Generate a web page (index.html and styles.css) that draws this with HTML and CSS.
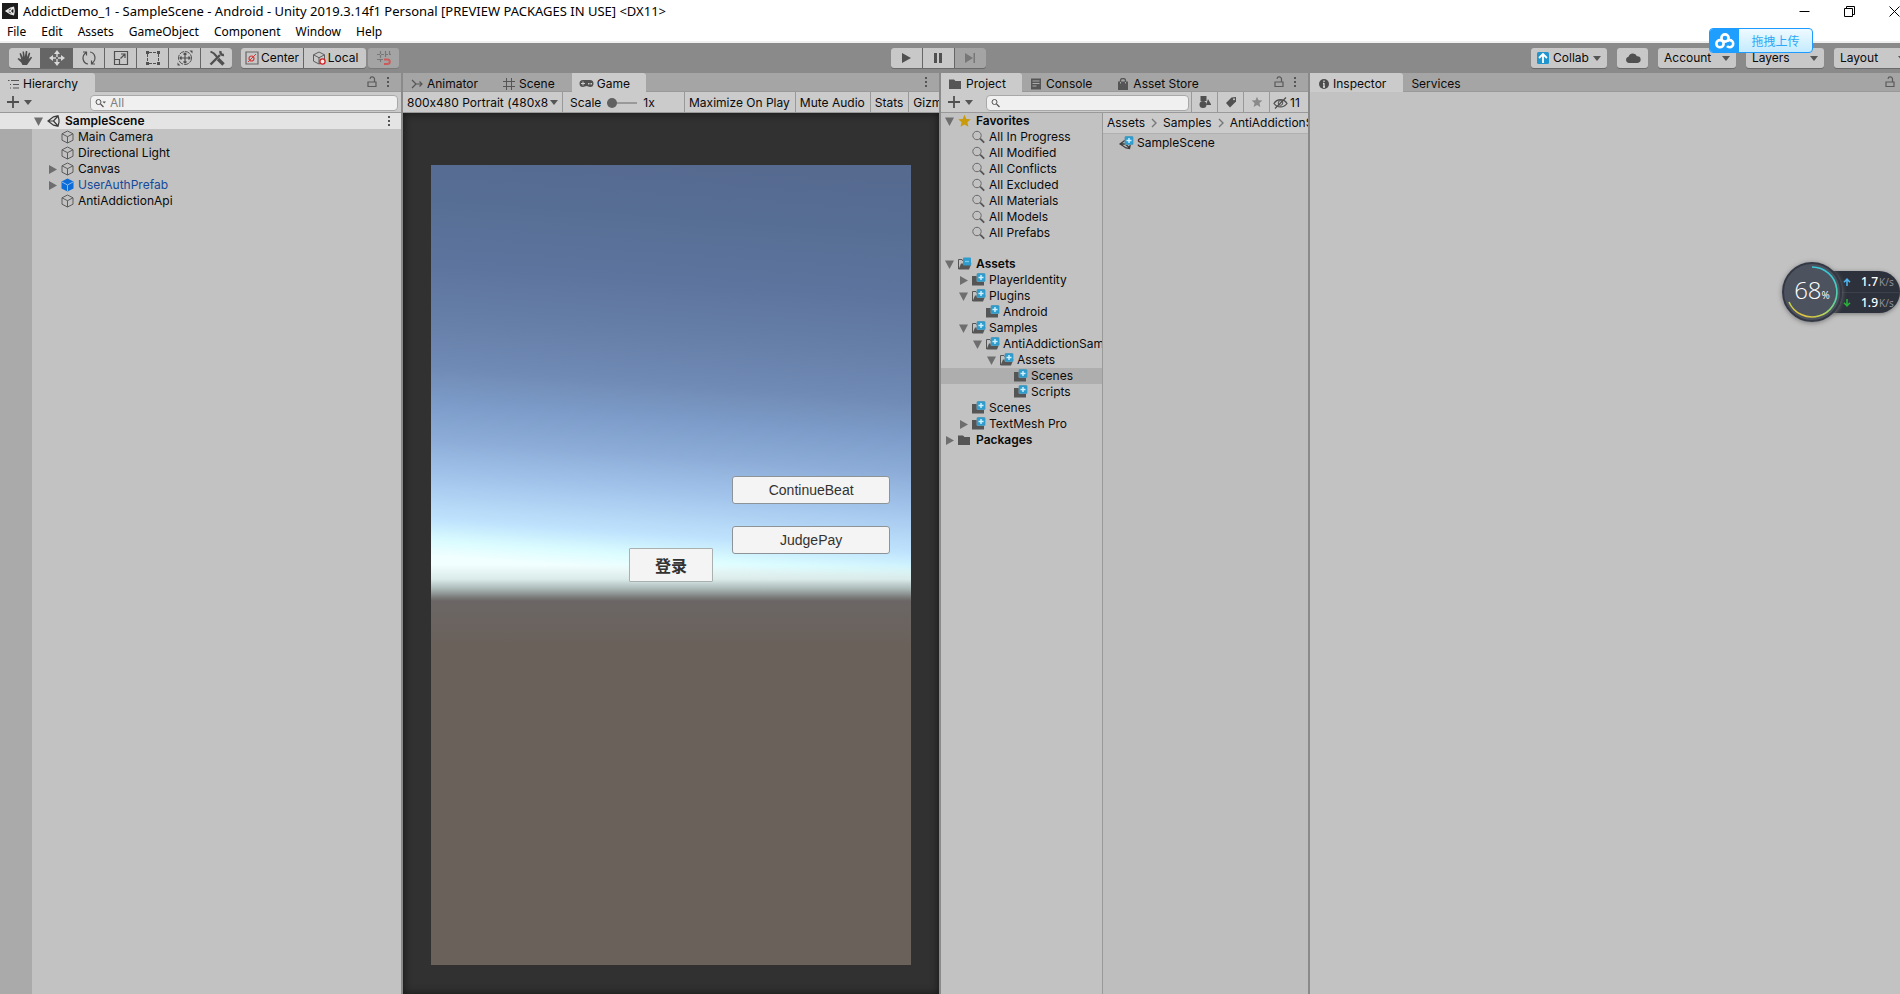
FILE: index.html
```html
<!DOCTYPE html>
<html lang="en">
<head>
<meta charset="utf-8">
<title>AddictDemo_1 - SampleScene - Android - Unity 2019.3.14f1 Personal</title>
<link rel="stylesheet" href="styles.css">
</head>
<body>
<svg class="defs" aria-hidden="true">
  <defs>
    <symbol id="cube" viewBox="0 0 14 14"><path d="M7 1l5.500 2.800v6.400L7 13l-5.500-2.800V3.800zM1.500 3.800L7 6.700l5.500-2.900M7 6.700V13" fill="none" stroke="#5c5c5c" stroke-linejoin="round"/></symbol>
    <symbol id="prefab" viewBox="0 0 14 14"><path d="M7 .5l6 3v7l-6 3-6-3v-7z" fill="#0c6cd8"/><path d="M1.500 4L7 7l5.500-3M7 7v6" fill="none" stroke="#8dbdf0"/></symbol>
    <symbol id="unity" viewBox="0 0 14 14"><path d="M1.500 7L7 2.800l4.500-1 1 4v2.400l-1 4-4.500-1zM1.500 7H7l4.500-5M7 7l4.500 5" fill="none" stroke="#3a3a3a" stroke-width="1.200"/></symbol>
    <symbol id="unityplus" viewBox="0 0 15 14"><path d="M1 8l5.500-4 4 .5 1 3-1 5-3.500-.5zM1 8h5l5 4M6 8l2-4" fill="none" stroke="#3c3c3c" stroke-width="1.300"/><use href="#plusbadge"/></symbol>
    <symbol id="right" viewBox="0 0 14 14"><path d="M3 3l8 4.500L3 12z" fill="#6e6e6e"/></symbol>
    <symbol id="down" viewBox="0 0 14 14"><path d="M2 3.500h9L6.500 12z" fill="#6e6e6e"/></symbol>
    <symbol id="caret" viewBox="0 0 8 5"><path d="M0 0h8L4 5z" fill="#555"/></symbol>
    <symbol id="lens" viewBox="0 0 14 14"><circle cx="5.500" cy="5.500" r="4.200" fill="none" stroke="#6a6a6a"/><path d="M8.700 8.700l4 4" stroke="#555" stroke-width="1.800"/></symbol>
    <symbol id="star" viewBox="0 0 14 14"><path d="M7 .8l1.800 4.100 4.500.4-3.400 3 1 4.400L7 10.400l-3.900 2.300 1-4.400-3.400-3 4.500-.4z" fill="currentColor"/></symbol>
    <symbol id="plusbadge" viewBox="0 0 15 14"><rect x="5.500" y="0" width="9" height="9" rx="1.500" fill="#6f9db0"/><rect x="6" y=".5" width="8" height="8" rx="1" fill="#2e9ccc"/><path d="M10 2v5M7.500 4.500h5" stroke="#d4f2ff" stroke-width="1.400"/></symbol>
    <symbol id="folder" viewBox="0 0 15 14"><path d="M1 2.500h5l1.500 1.500H13v8H1z" fill="#555"/></symbol>
    <symbol id="folderplus" viewBox="0 0 15 14"><path d="M1 3h5v2h7v7.500H1z" fill="#555"/><use href="#plusbadge"/></symbol>
    <symbol id="openplus" viewBox="0 0 15 14"><path d="M1.500 12V2.500H5l1 1.500h5" fill="none" stroke="#555"/><path d="M4 6.500h10.500L12 12.500H1.500z" fill="#555"/><use href="#plusbadge"/></symbol>
    <symbol id="openminus" viewBox="0 0 15 14"><path d="M1.500 12V2.500H5l1 1.500h5" fill="none" stroke="#555"/><path d="M4 6.500h10.500L12 12.500H1.500z" fill="#555"/><rect x="6" y=".5" width="8" height="8" rx="1" fill="#2e9ccc"/><path d="M8 4.500h4" stroke="#7cc8e8" stroke-width="1.400"/></symbol>
    <symbol id="lock" viewBox="0 0 10 12"><path d="M1 6h8v4.500H1zM7.500 6V3.500a2 2 0 0 0-4.500-.7" fill="none" stroke="#5a5a5a" stroke-width="1.200"/></symbol>
    <symbol id="dots" viewBox="0 0 4 12"><path d="M1 1h2v2H1zM1 5h2v2H1zM1 9h2v2H1z" fill="#555"/></symbol>
    <symbol id="plus" viewBox="0 0 12 12"><path d="M6 0v12M0 6h12" stroke="#505050" stroke-width="1.800"/></symbol>
    <symbol id="chev" viewBox="0 0 6 10"><path d="M1 1l4 4-4 4" fill="none" stroke="#777" stroke-width="1.400"/></symbol>
  </defs>
</svg>

<div class="app">
  <header class="titlebar">
    <svg class="logo" viewBox="0 0 16 16"><path d="M0 0h16v16H0z" fill="#1c1c1c"/><path d="M4 8l4.500-3 3-.7.6 3v1.400l-.6 3-3-.7zM4 8h4l3.500-3.500M8 8l3.500 3.500" fill="none" stroke="#e8e8e8" stroke-width="1.300"/></svg>
    <h1>AddictDemo_1 - SampleScene - Android - Unity 2019.3.14f1 Personal [PREVIEW PACKAGES IN USE] &lt;DX11&gt;</h1>
    <div class="winbtns">
      <button aria-label="Minimize"><svg viewBox="0 0 11 11"><path d="M.5 5.500h10" stroke="#000"/></svg></button>
      <button aria-label="Restore"><svg viewBox="0 0 11 11"><path d="M.5 2.500h8v8h-8zM2.500 2.500v-2h8v8h-2" fill="none" stroke="#000"/></svg></button>
      <button aria-label="Close"><svg viewBox="0 0 11 11"><path d="M.5.5l10 10M10.500.5l-10 10" stroke="#000"/></svg></button>
    </div>
  </header>
  <nav class="menubar">
    <button>File</button><button>Edit</button><button>Assets</button><button>GameObject</button><button>Component</button><button>Window</button><button>Help</button>
  </nav>

  <div class="toolbar">
    <div class="tools">
      <div class="group">
        <button aria-label="Hand"><svg viewBox="0 0 16 16"><path d="M4.300 9.500L2.500 3.500l1.300-.4L6 7.500 5.500 1.600 7 1.400l.8 5.400L8.800 1l1.500.1-.3 6 2-4.500 1.300.5-1.600 6 2.300-2.400 1.200.9-3.800 5.400-1.400 2H5.500L4.200 12.500.5 9l1-1z" fill="#505050"/></svg></button>
        <button class="on" aria-label="Move"><svg viewBox="0 0 16 16"><path d="M8 3v10M3 8h10" stroke="#d8d8d8" stroke-width="1.400"/><path d="M8 0l3 4H5zM8 16l3-4H5zM0 8l4-3v6zM16 8l-4-3v6z" fill="#d8d8d8"/><path d="M7 7h2v2H7z" fill="#656565"/></svg></button>
        <button aria-label="Rotate"><svg viewBox="0 0 16 16"><path d="M7 14C2.500 13.500-.5 7 5 2.500M9 2c4.500.500 7.500 7 2 11.500M2 2h3.500v3.500M14 14h-3.500v-3.500" fill="none" stroke="#505050" stroke-width="1.200"/></svg></button>
        <button aria-label="Scale"><svg viewBox="0 0 16 16"><path d="M1.500 1.500h13v13h-13zM1.500 9.500h5v5M7.500 8.500l4-4M8 4h4v4" fill="none" stroke="#505050" stroke-width="1.200"/></svg></button>
        <button aria-label="Rect"><svg viewBox="0 0 16 16"><path d="M2.500 4v8M13.500 4v8M4 2.500h8M4 13.500h8" stroke="#505050" stroke-dasharray="3 1"/><path d="M1 1h3v3H1zM12 1h3v3h-3zM1 12h3v3H1zM12 12h3v3h-3z" fill="#505050"/></svg></button>
        <button aria-label="Transform"><svg viewBox="0 0 16 16"><circle cx="8" cy="8" r="6.500" fill="none" stroke="#505050" stroke-dasharray="5 1"/><path d="M8 3v10M3 8h10M6.500 4.500L8 3l1.500 1.500M6.500 11.500L8 13l1.500-1.500M4.500 6.500L3 8l1.500 1.500M11.500 6.500L13 8l-1.500 1.500" fill="none" stroke="#505050" stroke-width="1.200"/><path d="M12.500 .500h3V3.500zM.5 12.500v3h3z" fill="#505050"/></svg></button>
        <button aria-label="Custom tools"><svg viewBox="0 0 16 16"><path d="M1.500 14.500L11 5" stroke="#505050" stroke-width="2.400"/><path d="M11.500 1a3.200 3.200 0 0 0 3.500 4" fill="none" stroke="#505050" stroke-width="2.400"/><path d="M1.500 1.500l3.500 2 3.500 4" fill="none" stroke="#505050" stroke-width="2"/><path d="M9 9l5.500 5.500" stroke="#505050" stroke-width="3.400"/></svg></button>
      </div>
      <div class="group wide">
        <button><svg viewBox="0 0 14 14"><path d="M1 1h12v12H1z" fill="none" stroke="#666" stroke-width="1.200"/><circle cx="6.500" cy="7.500" r="2.500" fill="none" stroke="#d03c3c" stroke-width="1.200"/><path d="M3 11l8-8" stroke="#d03c3c"/></svg>Center</button>
        <button><svg viewBox="0 0 14 14"><use href="#cube"/><circle cx="10.500" cy="10.500" r="2.600" fill="#eee" stroke="#d02020" stroke-width="1.300"/></svg>Local</button>
      </div>
      <button class="solo dim" aria-label="Snap"><svg viewBox="0 0 16 16"><path d="M4.500 1v12M9.500 1v6M13.500 1v4M1 4.500h14M1 9.500h6" stroke="#777" stroke-width="1.200" stroke-dasharray="3 1"/><path d="M8 9.500h3.500a2 2 0 0 1 0 4.500H8" fill="none" stroke="#cc5c5c" stroke-width="2"/></svg></button>
    </div>
    <div class="group play">
      <button aria-label="Play"><svg viewBox="0 0 12 12"><path d="M2 1l9 5-9 5z" fill="#505050"/></svg></button>
      <button aria-label="Pause"><svg viewBox="0 0 12 12"><path d="M2 1h3v10H2zM7 1h3v10H7z" fill="#505050"/></svg></button>
      <button class="dim" aria-label="Step"><svg viewBox="0 0 12 12"><path d="M1 1l8 5-8 5zM9.500 1H11v10H9.500z" fill="#777"/></svg></button>
    </div>
    <div class="account">
      <button class="collab"><svg class="up" viewBox="0 0 12 12"><rect width="12" height="12" rx="1.500" fill="#2196cc"/><path d="M6 11V2M2 6l4-4 4 4" fill="none" stroke="#fff" stroke-width="1.800"/></svg>Collab<svg class="caret"><use href="#caret"/></svg></button>
      <button class="cloud" aria-label="Cloud"><svg viewBox="0 0 16 12"><path d="M4 11a3.200 3.200 0 0 1-.5-6.300A4.500 4.500 0 0 1 12 4.200 3.300 3.300 0 0 1 12.500 11z" fill="#505050"/></svg></button>
      <button class="drop">Account<svg class="caret"><use href="#caret"/></svg></button>
      <button class="drop">Layers<svg class="caret"><use href="#caret"/></svg></button>
      <button class="drop">Layout<svg class="caret"><use href="#caret"/></svg></button>
    </div>
  </div>

  <main class="panels">
    <section class="panel">
      <div class="tabs">
        <button class="tab active hier"><svg class="i12" viewBox="0 0 12 12"><path d="M1 2.500h1.500M4 2.500h8M3 6.500h1M6 6.500h6M3 10h1M6 10h6" stroke="#555" stroke-width="1.200"/></svg>Hierarchy</button>
        <span class="ends"><svg class="lock"><use href="#lock"/></svg><svg class="dots"><use href="#dots"/></svg></span>
      </div>
      <div class="bar">
        <button class="add" aria-label="Create"><svg class="i12"><use href="#plus"/></svg><svg class="caret"><use href="#caret"/></svg></button>
        <label class="search"><svg class="find" viewBox="0 0 12 10"><circle cx="3.500" cy="4" r="2.500" fill="none" stroke="#555"/><path d="M5.500 6l3 3" stroke="#555" stroke-width="1.200"/><path d="M7.500 3.500H11L9.200 5.500z" fill="#555"/></svg><input type="text" placeholder="All" aria-label="Search hierarchy"></label>
      </div>
      <div class="scenetree">
        <ul class="tree">
          <li class="scene"><svg class="arrow"><use href="#down"/></svg><svg class="ic"><use href="#unity"/></svg><b>SampleScene</b><svg class="dots"><use href="#dots"/></svg></li>
          <li class="l1"><svg class="arrow"></svg><svg class="ic"><use href="#cube"/></svg>Main Camera</li>
          <li class="l1"><svg class="arrow"></svg><svg class="ic"><use href="#cube"/></svg>Directional Light</li>
          <li class="l1"><svg class="arrow"><use href="#right"/></svg><svg class="ic"><use href="#cube"/></svg>Canvas</li>
          <li class="l1 blue"><svg class="arrow"><use href="#right"/></svg><svg class="ic"><use href="#prefab"/></svg>UserAuthPrefab</li>
          <li class="l1"><svg class="arrow"></svg><svg class="ic"><use href="#cube"/></svg>AntiAddictionApi</li>
        </ul>
      </div>
    </section>

    <section class="panel">
      <div class="tabs">
        <button class="tab"><svg class="i12" viewBox="0 0 12 12"><path d="M1 2l4 4-4 4M5 6h6M8.500 3.500L11 6 8.500 8.500" fill="none" stroke="#555" stroke-width="1.200"/></svg>Animator</button>
        <button class="tab"><svg class="i12" viewBox="0 0 12 12"><path d="M3.500 0v12M8.500 0v12M0 3.500h12M0 8.500h12" stroke="#555"/></svg>Scene</button>
        <button class="tab active game"><svg class="pad" viewBox="0 0 15 9"><path d="M4 1h7a3.500 3.500 0 0 1 0 7c-1.500 0-2-1-3.500-1S5.500 8 4 8a3.500 3.500 0 0 1 0-7z" fill="#505050"/><path d="M4 2.500v4M2 4.500h4" stroke="#ccc"/><path d="M9 4h1.500v1.500H9zM11.500 4H13v1.500h-1.500z" fill="#ccc"/></svg>Game</button>
        <span class="ends"><svg class="dots"><use href="#dots"/></svg></span>
      </div>
      <div class="bar gamebar">
        <div class="aspect"><select aria-label="Aspect"><option>800x480 Portrait (480x800)</option></select><svg class="caret"><use href="#caret"/></svg></div>
        <label class="scale">Scale<input type="range" min="1" max="5" value="1"><span>1x</span></label>
        <button>Maximize On Play</button>
        <button>Mute Audio</button>
        <button>Stats</button>
        <button>Gizmos</button>
      </div>
      <div class="gameview">
        <div class="canvas">
          <button class="gbtn beat">ContinueBeat</button>
          <button class="gbtn pay">JudgePay</button>
          <button class="gbtn login">登录</button>
        </div>
      </div>
    </section>

    <section class="panel">
      <div class="tabs">
        <button class="tab active proj"><svg class="fold"><use href="#folder"/></svg>Project</button>
        <button class="tab"><svg class="i12" viewBox="0 0 12 12"><path d="M1 .5h10v11H1z" fill="#555"/><path d="M2.500 3h7M2.500 5.500h7M2.500 8h4" stroke="#aaa"/></svg>Console</button>
        <button class="tab"><svg class="i12" viewBox="0 0 12 12"><path d="M1 3.500h10V12H1z" fill="#555"/><path d="M3.500 5V2.500a2.500 2 0 0 1 5 0V5" fill="none" stroke="#555" stroke-width="1.300"/><path d="M3.500 4v1.500M8.500 4v1.500" stroke="#aaa"/></svg>Asset Store</button>
        <span class="ends"><svg class="lock"><use href="#lock"/></svg><svg class="dots"><use href="#dots"/></svg></span>
      </div>
      <div class="bar projbar">
        <button class="add" aria-label="Create"><svg class="i12"><use href="#plus"/></svg><svg class="caret"><use href="#caret"/></svg></button>
        <label class="search"><svg class="find" viewBox="0 0 12 10"><circle cx="3.500" cy="4" r="2.500" fill="none" stroke="#555"/><path d="M5.500 6l3 3" stroke="#555" stroke-width="1.200"/></svg><input type="text" aria-label="Search project"></label>
        <button class="filter" aria-label="Filter by type"><svg class="i12" viewBox="0 0 12 12"><path d="M1.500 0h6v5h-6zM9 3l3.500 6H7z" fill="#505050"/><circle cx="4" cy="8.500" r="3.500" fill="#505050"/></svg></button>
        <button class="filter" aria-label="Filter by label"><svg class="i12" viewBox="0 0 12 12"><path d="M1 7l5.500-5.500L11 1v4.500L5 11.500z" fill="#505050"/><circle cx="9" cy="3.200" r="1" fill="#ccc"/></svg></button>
        <button class="filter faint" aria-label="Favorite"><svg class="i12" viewBox="0 0 14 14"><use href="#star"/></svg></button>
        <button class="hidden"><svg viewBox="0 0 15 12"><path d="M1 6.500C4 1.500 11 1.500 14 6.500 11 11 4 11 1 6.500zM2 11.500L13 .5" fill="none" stroke="#505050" stroke-width="1.300"/><circle cx="7.500" cy="6" r="2.300" fill="none" stroke="#505050"/></svg>11</button>
      </div>
      <div class="split">
        <div class="folders">
          <ul class="tree">
            <li><svg class="arrow"><use href="#down"/></svg><svg class="ic gold"><use href="#star"/></svg><b>Favorites</b></li>
            <li class="l1"><svg class="arrow"></svg><svg class="ic"><use href="#lens"/></svg>All In Progress</li>
            <li class="l1"><svg class="arrow"></svg><svg class="ic"><use href="#lens"/></svg>All Modified</li>
            <li class="l1"><svg class="arrow"></svg><svg class="ic"><use href="#lens"/></svg>All Conflicts</li>
            <li class="l1"><svg class="arrow"></svg><svg class="ic"><use href="#lens"/></svg>All Excluded</li>
            <li class="l1"><svg class="arrow"></svg><svg class="ic"><use href="#lens"/></svg>All Materials</li>
            <li class="l1"><svg class="arrow"></svg><svg class="ic"><use href="#lens"/></svg>All Models</li>
            <li class="l1"><svg class="arrow"></svg><svg class="ic"><use href="#lens"/></svg>All Prefabs</li>
          </ul>
          <ul class="tree">
            <li><svg class="arrow"><use href="#down"/></svg><svg class="ic"><use href="#openminus"/></svg><b>Assets</b></li>
            <li class="l1"><svg class="arrow"><use href="#right"/></svg><svg class="ic"><use href="#folderplus"/></svg>PlayerIdentity</li>
            <li class="l1"><svg class="arrow"><use href="#down"/></svg><svg class="ic"><use href="#openplus"/></svg>Plugins</li>
            <li class="l2"><svg class="arrow"></svg><svg class="ic"><use href="#folderplus"/></svg>Android</li>
            <li class="l1"><svg class="arrow"><use href="#down"/></svg><svg class="ic"><use href="#openplus"/></svg>Samples</li>
            <li class="l2"><svg class="arrow"><use href="#down"/></svg><svg class="ic"><use href="#openplus"/></svg>AntiAddictionSample</li>
            <li class="l3"><svg class="arrow"><use href="#down"/></svg><svg class="ic"><use href="#openplus"/></svg>Assets</li>
            <li class="l4 selected"><svg class="arrow"></svg><svg class="ic"><use href="#folderplus"/></svg>Scenes</li>
            <li class="l4"><svg class="arrow"></svg><svg class="ic"><use href="#folderplus"/></svg>Scripts</li>
            <li class="l1"><svg class="arrow"></svg><svg class="ic"><use href="#folderplus"/></svg>Scenes</li>
            <li class="l1"><svg class="arrow"><use href="#right"/></svg><svg class="ic"><use href="#folderplus"/></svg>TextMesh Pro</li>
            <li><svg class="arrow"><use href="#right"/></svg><svg class="ic"><use href="#folder"/></svg><b>Packages</b></li>
          </ul>
        </div>
        <div class="files">
          <div class="crumbs"><span>Assets</span><svg><use href="#chev"/></svg><span>Samples</span><svg><use href="#chev"/></svg><span>AntiAddictionSample</span></div>
          <div class="file"><svg class="ic"><use href="#unityplus"/></svg>SampleScene</div>
        </div>
      </div>
    </section>

    <section class="panel">
      <div class="tabs">
        <button class="tab active"><svg class="info" viewBox="0 0 10 10"><circle cx="5" cy="5" r="5" fill="#4c4c4c"/><path d="M5 1.500v1.500M5 4v4M4 8h2M4 4.500h1" stroke="#ddd" stroke-width="1.300"/></svg>Inspector</button>
        <button class="tab">Services</button>
        <span class="ends last"><svg class="lock"><use href="#lock"/></svg></span>
      </div>
    </section>
  </main>

  <button class="upload"><span class="mark"><svg viewBox="0 0 20 16"><g fill="none" stroke="#fff" stroke-width="2.600"><circle cx="10" cy="5" r="3.600"/><circle cx="5" cy="10.700" r="3.600"/><path d="M12 8.200a3.600 3.600 0 1 1 0 5"/></g></svg></span><span class="word">拖拽上传</span></button>

  <aside class="meter">
    <div class="rates">
      <div><svg viewBox="0 0 8 8"><path d="M4 8V1.500M1 4.200l3-3 3 3" fill="none" stroke="#4db4f0" stroke-width="1.600"/></svg><b>1.7</b><small>K/s</small></div>
      <div><svg viewBox="0 0 8 8"><path d="M4 0v6.500M1 3.800l3 3 3-3" fill="none" stroke="#27b03a" stroke-width="1.600"/></svg><b>1.9</b><small>K/s</small></div>
    </div>
    <div class="dial">
      <svg viewBox="0 0 60 60"><defs><linearGradient id="arc" x1=".6" y1="0" x2=".2" y2="1"><stop offset="0" stop-color="#35c8d8"/><stop offset=".5" stop-color="#62d498"/><stop offset=".8" stop-color="#c0d850"/><stop offset="1" stop-color="#e8b83c"/></linearGradient></defs><circle cx="30" cy="30" r="29" fill="#4c525e" stroke="#333844" stroke-width="2"/><path d="M30 5a25 25 0 1 1-23 35" fill="none" stroke="url(#arc)" stroke-width="1.600"/></svg>
      <span>68<small>%</small></span>
    </div>
  </aside>
</div>
</body>
</html>
```
FILE: styles.css
```css
* { box-sizing: border-box; }
body {
  margin: 0;
  font: 12px/16px Inter, "Liberation Sans", sans-serif;
  font-feature-settings: "calt" 0;
  color: #0a0a0a;
  overflow: hidden;
}
button, input, select { font: inherit; font-feature-settings: inherit; color: inherit; margin: 0; padding: 0; border: 0; background: none; border-radius: 0; }
svg { display: block; flex: none; }
.defs { position: absolute; width: 0; height: 0; }
.app { position: relative; display: flex; flex-direction: column; height: 100vh; overflow: hidden; background: #8a8a8a; }

.titlebar { display: flex; align-items: center; height: 22px; padding-left: 2px; gap: 5px; background: #fff; }
.logo { width: 16px; height: 16px; }
.titlebar h1 { margin: 0; font: 13px/18px "Noto Sans", sans-serif; color: #000; white-space: nowrap; }
.winbtns { display: flex; margin-left: auto; gap: 34px; }
.winbtns svg { width: 11px; height: 11px; }
.menubar { display: flex; height: 21px; padding-left: 7px; gap: 15px; background: #fff; border-bottom: 2px solid #f0f0f0; font: 12px/20px "Noto Sans", sans-serif; color: #000; }

.toolbar { display: grid; grid-template-columns: 891fr auto 915fr; align-items: center; height: 30px; }
.tools { display: flex; gap: 9px; padding-left: 9px; }
.tools .solo { margin-left: -7px; }
.group { display: flex; gap: 1px; background: #666; border-radius: 3px; overflow: hidden; box-shadow: 0 1px 0 #6a6a6a; }
.toolbar button { display: flex; align-items: center; justify-content: center; height: 20px; min-width: 31px; background: #c8c8c8; }
.toolbar button.on { background: #656565; }
.toolbar button.dim { background: #a4a4a4; }
.toolbar button.solo { border-radius: 3px; box-shadow: 0 1px 0 #7a7a7a; }
.tools svg { width: 16px; height: 16px; }
.tools .wide button { width: 62px; gap: 2px; }
.tools .wide svg { width: 14px; height: 14px; }
.play svg { width: 12px; height: 12px; }
.account { display: flex; justify-content: flex-end; gap: 10px; margin-right: -12px; }
.account button { border-radius: 3px; box-shadow: 0 1px 0 #6a6a6a; }
.caret { width: 8px; height: 5px; }
.account .collab { width: 76px; gap: 4px; }
.up { width: 12px; height: 12px; }
.cloud svg { width: 16px; height: 12px; }
.account .drop { width: 78px; padding: 0 6px; justify-content: space-between; }

.panels { flex: 1; min-height: 0; display: grid; grid-template-columns: minmax(0, 401fr) minmax(0, 536fr) minmax(0, 367fr) minmax(0, 590fr); gap: 2px; }
.panel { display: flex; flex-direction: column; min-height: 0; background: #c2c2c2; overflow: hidden; }
.tabs { display: flex; height: 19px; background: #a5a5a5; border-bottom: 1px solid #999; flex: none; }
.tab { display: flex; align-items: center; gap: 4px; height: 19px; padding: 2px 17px 0 8px; white-space: nowrap; }
.tab.active { background: #cbcbcb; border-radius: 0 3px 0 0; }
.tab.hier { padding-left: 7px; }
.tab.game { gap: 3px; padding: 2px 16px 0 7px; }
.tab.proj { gap: 3px; padding: 2px 16px 0 7px; }
.ends { display: flex; align-items: center; gap: 9px; margin-left: auto; padding-right: 11px; }
.ends.last { padding-right: 5px; }
.lock { width: 10px; height: 12px; }
.dots { width: 4px; height: 12px; }
.info { width: 10px; height: 10px; margin-left: 1px; }
.i12 { width: 12px; height: 12px; }
.find { width: 12px; height: 10px; }
.pad { width: 15px; height: 9px; }
.fold { width: 15px; height: 14px; }
.bar { display: flex; align-items: center; height: 21px; background: #cbcbcb; border-bottom: 1px solid #999; flex: none; }
.add { display: flex; align-items: center; gap: 5px; padding-left: 7px; width: 90px; }
.search { display: flex; flex: 1; align-items: center; min-width: 0; gap: 3px; height: 16px; margin: 1px 3px 0 0; padding-left: 4px; border: 1px solid #a8a8a8; border-radius: 4px; background: #f0f0f0; }
.search input { flex: 1; min-width: 0; outline: 0; }
.search input::placeholder { color: #808080; opacity: 1; }

.scenetree { flex: 1; background: linear-gradient(90deg, #aaa 32px, #c2c2c2 32px); }
.tree { list-style: none; margin: 0; padding: 0; }
.tree li { display: flex; align-items: center; height: 16px; padding-left: 2px; white-space: nowrap; }
.tree .l1 { padding-left: 16px; }
.tree .l2 { padding-left: 30px; }
.tree .l3 { padding-left: 44px; }
.tree .l4 { padding-left: 58px; }
.tree b { font-weight: 600; }
.folders .tree b { margin-left: 1px; }
.arrow { width: 14px; height: 14px; }
.ic { width: 15px; height: 14px; margin-right: 3px; }
.gold { color: #c99a0a; }
.scenetree .tree li { padding-left: 46px; }
.scenetree .tree .scene { padding: 0 10px 0 32px; background: #e4e4e4; }
.scene .dots { margin-left: auto; }
.scene .ic { margin-right: 4px; }
.blue { color: #134a9a; }
.selected { background: #aeaeae; }

.gamebar > * { height: 20px; padding-top: 1px; border-right: 1px solid #999; flex: none; }
.gamebar button { padding: 1px 5px 0 4px; }
.aspect { position: relative; display: flex; align-items: center; width: 160px; padding: 1px 4px 0; gap: 2px; }
.aspect select { appearance: none; flex: 1; min-width: 0; text-overflow: clip; }
.scale { display: flex; align-items: center; width: 122px; padding-left: 7px; gap: 6px; }
.scale input { appearance: none; width: 30px; height: 10px; background: linear-gradient(#999, #999) center / 100% 2px no-repeat; }
.scale input::-webkit-slider-thumb { appearance: none; width: 10px; height: 10px; border-radius: 50%; background: #616161; }

.gameview { flex: 1; padding: 52px 28px 29px; background: #313131; box-shadow: inset 0 0 8px #161616; }
.canvas {
  position: relative;
  aspect-ratio: 3 / 5;
  background:
    linear-gradient(180deg, transparent 50%, #d9eae9 51.8%, #a9b7b5 53%, #787878 54.1%, #6b6665 54.5%, #6a615b 60%, #6a615b),
    linear-gradient(184deg, #56698f 0, #576e94 8%, #5d749e 16%, #6680aa 23%, #6f8ab4 28%, #7e9dca 33%, #8dadd8 37%, #a3c5ec 41.5%, #bfe3fd 46.5%, #dafcff 49%, #f2ffff 51%);
}
.gbtn { position: absolute; background: #f4f4f4; border: 1px solid #8d9498; border-radius: 3px; color: #323232; font: 14px/20px "Liberation Sans", sans-serif; }
.beat, .pay { left: 62.7%; width: 33%; height: 3.5%; }
.beat { top: 38.9%; }
.pay { top: 45.1%; }
.login { left: 41.2%; top: 47.9%; width: 17.6%; height: 4.2%; border-radius: 1px; border-color: #a9b0b0; font: 700 16px/20px "Noto Sans CJK SC", sans-serif; }

.projbar .add { width: 45px; }
.projbar .search { margin-right: 2px; }
.filter, .hidden { display: flex; align-items: center; justify-content: center; width: 26px; height: 20px; border-left: 1px solid #999; }
.faint { color: #8a8a8a; }
.hidden { width: 39px; gap: 2px; padding: 1px 5px 0 0; }
.hidden svg { width: 15px; height: 12px; }
.split { flex: 1; display: grid; grid-template-columns: minmax(0, 162fr) minmax(0, 205fr); }
.folders { display: flex; flex-direction: column; gap: 15px; overflow: hidden; border-right: 1px solid #999; }
.files { overflow: hidden; background: #bebebe; }
.crumbs { display: flex; align-items: center; gap: 6px; height: 21px; padding-left: 4px; background: #cbcbcb; border-bottom: 1px solid #b0b0b0; white-space: nowrap; }
.crumbs svg { width: 6px; height: 10px; }
.file { display: flex; align-items: center; height: 18px; padding-left: 16px; }

.upload { position: absolute; top: 28px; right: 87px; display: flex; width: 104px; height: 25px; border: 1px solid #1e9bff; border-radius: 4px; overflow: hidden; background: linear-gradient(#effaff, #c4ebff); }
.mark { display: flex; align-items: center; justify-content: center; width: 29px; height: 100%; background: #1e9fff; }
.mark svg { width: 20px; height: 16px; }
.word { flex: 1; font: 12px/24px "Noto Sans CJK SC", sans-serif; color: #2ba8f5; }

.meter { position: absolute; top: 262px; right: 0; display: flex; align-items: center; font-family: "Noto Sans", sans-serif; }
.dial { order: -1; position: relative; width: 60px; height: 60px; margin-right: -12px; border-radius: 50%; box-shadow: 0 1px 5px #777; display: flex; align-items: center; justify-content: center; color: #fff; }
.dial svg { position: absolute; inset: 0; width: 60px; height: 60px; }
.dial span { position: relative; font: 300 24px/28px "Open Sans", sans-serif; white-space: nowrap; }
.dial small { font-size: 10px; font-weight: 400; }
.rates { display: grid; grid-template-rows: 21px 21px; width: 70px; border-radius: 0 21px 21px 0; background: #2d313b; color: #fff; box-shadow: 0 1px 4px #777; overflow: hidden; }
.rates div { display: flex; align-items: center; padding-left: 13px; }
.rates div + div { border-top: 1px solid #3b404b; }
.rates svg { width: 8px; height: 8px; margin-right: 10px; }
.rates b { font-weight: 500; font-size: 12px; }
.rates small { font-size: 10px; color: #8b909a; margin-left: 1px; }
```
